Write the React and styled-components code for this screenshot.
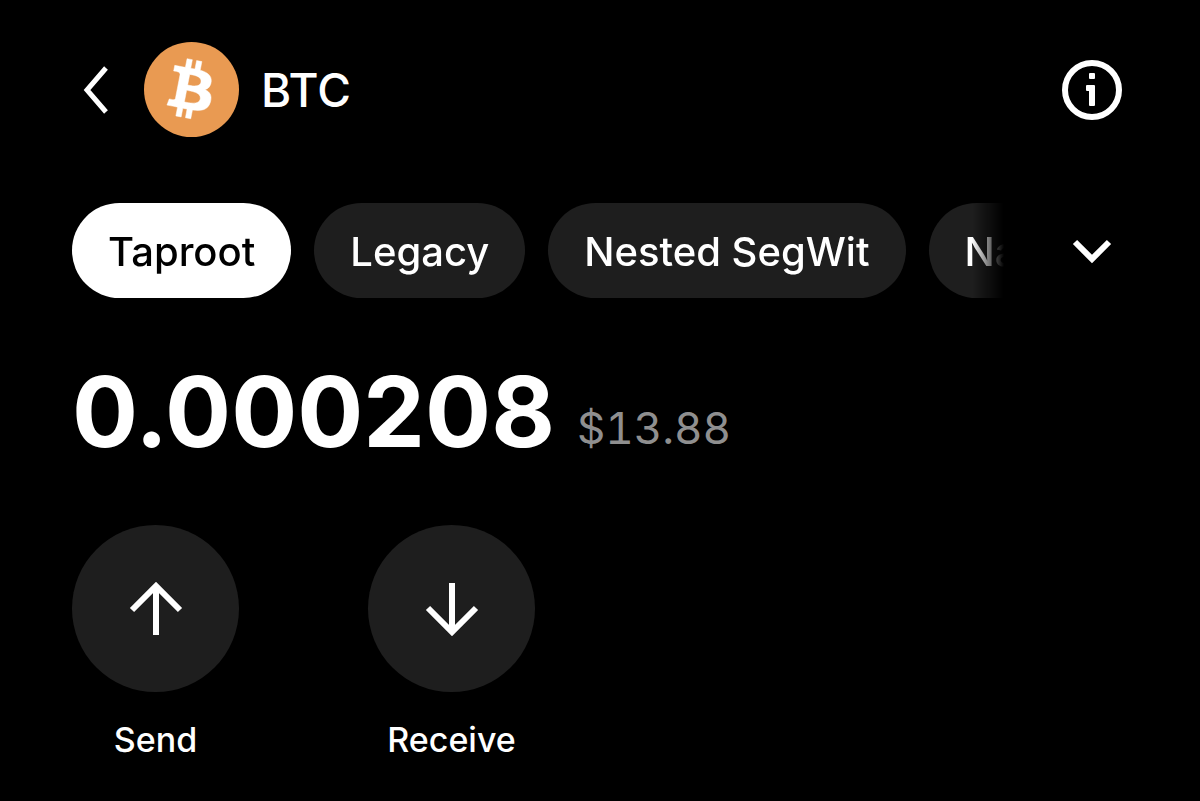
import React, { useState } from 'react';
import styled, { createGlobalStyle } from 'styled-components';

const GlobalStyle = createGlobalStyle`
  * {
    box-sizing: border-box;
  }

  body {
    margin: 0;
    background: #000;
    color: #fff;
    font-family: Inter, 'Liberation Sans', sans-serif;
    font-weight: 500;
  }

  button {
    padding: 0;
    border: 0;
    background: none;
    color: inherit;
    font: inherit;
    cursor: pointer;
  }

  svg {
    display: block;
    flex: none;
  }
`;

const Page = styled.main`
  padding: 42px 78px 40px 72px;
`;

const Header = styled.header`
  display: flex;
  align-items: center;
  margin-bottom: 66px;
`;

const IconButton = styled.button`
  display: flex;
  flex: none;
  align-items: center;
  justify-content: center;
  width: ${({ $width }) => $width || 60}px;
  height: 60px;
`;

const Coin = styled.div`
  display: flex;
  flex: 1;
  align-items: center;
  gap: 22px;
  margin-left: 24px;
`;

const CoinName = styled.h1`
  margin: 0;
  font-size: 46px;
  line-height: 56px;
  font-weight: 500;
`;

const AddressTypes = styled.div`
  display: flex;
  align-items: center;
  gap: 56px;
  margin-bottom: 52px;
`;

const ChipList = styled.div`
  display: flex;
  flex: 1;
  min-width: 0;
  gap: 23px;
  overflow: hidden;
  mask-image: linear-gradient(to right, #000 calc(100% - 34px), transparent calc(100% - 2px));
`;

const Chip = styled.button`
  flex: none;
  height: 95px;
  padding: 2px 36px 0;
  border-radius: 48px;
  background: ${({ $active }) => ($active ? '#fff' : '#1e1e1e')};
  color: ${({ $active }) => ($active ? '#000' : '#fff')};
  font-size: 40px;
  line-height: 48px;
  white-space: nowrap;
`;

const Balance = styled.div`
  display: flex;
  align-items: flex-end;
  gap: 22px;
  margin-bottom: 51px;
`;

const Amount = styled.span`
  font-size: 98px;
  line-height: 124px;
  font-weight: 700;
`;

const Fiat = styled.span`
  padding-bottom: 18px;
  color: #8f8f8f;
  font-size: 44px;
  line-height: 56px;
  font-weight: 400;
  font-variant-numeric: tabular-nums;
`;

const Actions = styled.div`
  display: flex;
  gap: 129px;
`;

const Action = styled.button`
  display: flex;
  flex-direction: column;
  align-items: center;
  gap: 28px;
  width: 167px;
  font-size: 34px;
  line-height: 40px;
`;

const ActionIcon = styled.span`
  display: flex;
  align-items: center;
  justify-content: center;
  width: 167px;
  height: 167px;
  border-radius: 50%;
  background: #1e1e1e;
`;

const BackIcon = () => (
  <svg width="26" height="48" viewBox="0 0 26 48" fill="none" stroke="#fff" strokeWidth="5">
    <path d="M23 2 4 24l19 22" />
  </svg>
);

const BitcoinLogo = () => (
  <svg width="95" height="95" viewBox="0 0 24 24">
    <circle cx="12" cy="12" r="12" fill="#e99a52" />
    <path
      fill="#fff"
      stroke="#fff"
      strokeWidth="0.12"
      fillRule="evenodd"
      d="M17.288 10.291c.24-1.59-.974-2.45-2.64-3.03l.54-2.153-1.315-.33-.525 2.107c-.345-.087-.705-.167-1.064-.25l.526-2.127-1.32-.33-.54 2.165c-.285-.067-.565-.132-.84-.2l-1.815-.45-.35 1.407s.975.225.955.236c.535.136.63.486.615.766l-1.477 5.92c-.075.166-.24.406-.614.314.015.02-.96-.24-.96-.24l-.66 1.51 1.71.426.93.242-.54 2.19 1.32.327.54-2.17c.36.1.705.19 1.05.273l-.51 2.154 1.32.33.545-2.19c2.24.427 3.93.257 4.64-1.774.57-1.637-.03-2.58-1.217-3.196.854-.193 1.5-.76 1.68-1.93zm-3 4.22c-.404 1.64-3.157.75-4.05.53l.72-2.9c.896.23 3.757.67 3.33 2.37zm.41-4.24c-.37 1.49-2.662.735-3.405.55l.654-2.64c.744.18 3.137.524 2.75 2.084z"
      transform="translate(-0.2 0) rotate(-3 12 12)"
    />
  </svg>
);

const InfoIcon = () => (
  <svg width="60" height="60" viewBox="0 0 60 60" fill="#fff">
    <circle cx="30" cy="30" r="27" fill="none" stroke="#fff" strokeWidth="6" />
    <rect x="27" y="13" width="6" height="6" rx="1" />
    <path d="M25 25h7q1 0 1 1v19q0 1-1 1h-4q-1 0-1-1V31h-2q-1 0-1-1v-4q0-1 1-1z" />
  </svg>
);

const ChevronIcon = () => (
  <svg width="40" height="26" viewBox="0 0 40 26" fill="none" stroke="#fff" strokeWidth="6">
    <path d="m3 4 17 17L37 4" />
  </svg>
);

const ArrowIcon = ({ down }) => (
  <svg width="54" height="54" viewBox="0 0 54 54" fill="none" stroke="#fff" strokeWidth="6">
    <g transform={down ? 'rotate(180 27 27)' : undefined}>
      <path d="M27 5v48M3 28 27 4l24 24" />
    </g>
  </svg>
);

const types = ['Taproot', 'Legacy', 'Nested SegWit', 'Native SegWit'];

const App = () => {
  const [active, setActive] = useState('Taproot');

  return (
    <>
      <GlobalStyle />
      <Page>
        <Header>
          <IconButton $width={48} aria-label="Back"><BackIcon /></IconButton>
          <Coin>
            <BitcoinLogo />
            <CoinName>BTC</CoinName>
          </Coin>
          <IconButton aria-label="Info"><InfoIcon /></IconButton>
        </Header>
        <AddressTypes>
          <ChipList>
            {types.map((type) => (
              <Chip key={type} $active={type === active} onClick={() => setActive(type)}>{type}</Chip>
            ))}
          </ChipList>
          <IconButton aria-label="Show all address types"><ChevronIcon /></IconButton>
        </AddressTypes>
        <Balance>
          <Amount>0.000208</Amount>
          <Fiat>$13.88</Fiat>
        </Balance>
        <Actions>
          <Action>
            <ActionIcon><ArrowIcon /></ActionIcon>
            Send
          </Action>
          <Action>
            <ActionIcon><ArrowIcon down /></ActionIcon>
            Receive
          </Action>
        </Actions>
      </Page>
    </>
  );
};

export default App;
